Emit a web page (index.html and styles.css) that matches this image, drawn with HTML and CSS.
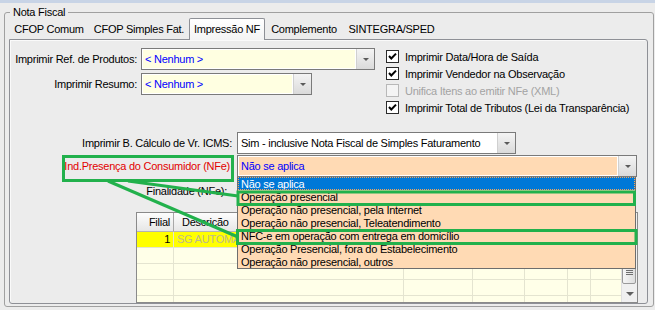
FILE: index.html
```html
<!DOCTYPE html>
<html lang="pt-BR">
<head>
<meta charset="UTF-8">
<title>Nota Fiscal - Impressão NF</title>
<link rel="stylesheet" href="styles.css">
</head>
<body>
<div class="titlebar"></div>
<fieldset class="group">
    <legend>Nota Fiscal</legend>
    <div class="tabs">
        <div class="tab tab-comum">CFOP Comum</div>
        <div class="tab tab-simples">CFOP Simples Fat.</div>
        <div class="tab tab-impressao active">Impressão NF</div>
        <div class="tab tab-complemento">Complemento</div>
        <div class="tab tab-sintegra">SINTEGRA/SPED</div>
    </div>
    <div class="page">
        <div class="top">
            <div class="fields">
                <div class="field">
                    <span class="lbl">Imprimir Ref. de Produtos:</span>
                    <div class="combo combo-ref"><span class="val yellow">&lt; Nenhum &gt;</span><span class="btn"></span></div>
                </div>
                <div class="field">
                    <span class="lbl">Imprimir Resumo:</span>
                    <div class="combo combo-resumo"><span class="val yellow">&lt; Nenhum &gt;</span><span class="btn"></span></div>
                </div>
            </div>
            <div class="checks">
                <label class="check"><span class="box checked"></span>Imprimir Data/Hora de Saída</label>
                <label class="check"><span class="box checked"></span>Imprimir Vendedor na Observação</label>
                <label class="check disabled"><span class="box"></span>Unifica Itens ao emitir NFe (XML)</label>
                <label class="check"><span class="box checked"></span>Imprimir Total de Tributos (Lei da Transparência)</label>
            </div>
        </div>

        <div class="row row-icms">
            <span class="lbl">Imprimir B. Cálculo de Vr. ICMS:</span>
            <div class="combo combo-icms"><span class="val white">Sim - inclusive Nota Fiscal de Simples Faturamento</span><span class="btn"></span></div>
        </div>

        <div class="row row-presenca">
            <span class="lbl red">Ind.Presença do Consumidor (NFe)</span>
            <div class="combo combo-presenca">
                <span class="val peach">Não se aplica</span><span class="btn"></span>
                <ul class="droplist">
                    <li class="selected">Não se aplica</li>
                    <li>Operação presencial</li>
                    <li>Operação não presencial, pela Internet</li>
                    <li>Operação não presencial, Teleatendimento</li>
                    <li>NFC-e em operação com entrega em domicílio</li>
                    <li>Operação Presencial, fora do Estabelecimento</li>
                    <li>Operação não presencial, outros</li>
                </ul>
            </div>
        </div>

        <div class="row row-finalidade">
            <span class="lbl">Finalidade (NFe):</span>
        </div>

        <div class="grid">
            <div class="cols">
                <div class="grow head">
                    <span class="right">Filial</span><span>Descrição</span><span></span><span></span><span></span><span></span><span></span>
                </div>
                <div class="grow hilite">
                    <span class="right">1</span><span class="muted">SG AUTOMAÇÃO</span><span></span><span></span><span></span><span></span><span></span>
                </div>
                <div class="grow"><span></span><span></span><span></span><span></span><span></span><span></span><span></span></div>
                <div class="grow"><span></span><span></span><span></span><span></span><span></span><span></span><span></span></div>
                <div class="grow"><span></span><span></span><span></span><span></span><span></span><span></span><span></span></div>
                <div class="grow"><span></span><span></span><span></span><span></span><span></span><span></span><span></span></div>
            </div>
            <div class="vscroll">
                <span class="sbtn up"></span>
                <span class="thumb"></span>
                <span class="sbtn down"></span>
            </div>
        </div>
    </div>
</fieldset>

<svg class="notes" width="655" height="310" viewBox="0 0 655 310">
    <rect x="63.5" y="156.5" width="169" height="24"></rect>
    <rect x="238" y="192" width="396.5" height="12.5"></rect>
    <rect x="237.5" y="230.5" width="398.5" height="13"></rect>
    <line x1="128" y1="181" x2="238" y2="196"></line>
    <line x1="108" y1="181" x2="238" y2="237"></line>
</svg>
</body>
</html>
```

FILE: styles.css
```css
body {
    margin: 0;
    width: 655px;
    height: 310px;
    overflow: hidden;
    position: relative;
    background-color: #ececec;
    color: #000;
    font-family: "Liberation Sans", Arial, sans-serif;
    font-size: 11px;
    letter-spacing: -0.25px;
}
.titlebar {
    height: 3px;
    background-color: #c8d4e6;
}
.group {
    margin: 3px 1px 0 4px;
    padding: 0 5px 2px 4px;
    border: 1px solid #a0a0a0;
    border-radius: 3px;
    height: 301px;
    box-sizing: border-box;
    min-width: 0;
}
.group legend {
    margin-left: 1px;
    padding: 0 3px;
    line-height: 13px;
}
.tabs {
    display: flex;
    height: 20px;
    align-items: flex-end;
}
.tab {
    height: 20px;
    line-height: 20px;
    text-align: center;
    white-space: nowrap;
}
.tab-comum { width: 80px; }
.tab-simples { width: 100px; }
.tab-impressao { width: 74px; }
.tab-complemento { width: 78px; }
.tab-sintegra { width: 97px; }
.tab.active {
    height: 21px;
    line-height: 20px;
    margin-bottom: -1px;
    border: 1px solid #8e9096;
    border-bottom: none;
    border-radius: 2px 2px 0 0;
    background: linear-gradient(#ffffff, #f4f4f4);
    position: relative;
    z-index: 1;
}
.page {
    height: 265px;
    box-sizing: border-box;
    border: 1px solid #8e9096;
    border-radius: 0 3px 3px 3px;
    box-shadow: inset 1px 1px 0 #fafafa;
    background-color: #ececec;
}
.top {
    display: flex;
    gap: 11px;
    padding-top: 8px;
}
.fields {
    width: 365px;
    display: flex;
    flex-direction: column;
    gap: 3px;
}
.field {
    display: flex;
    align-items: center;
    gap: 4px;
    height: 22px;
}
.field .lbl {
    width: 127px;
    text-align: right;
    white-space: nowrap;
}
.combo {
    display: flex;
    height: 22px;
    box-sizing: border-box;
    border: 1px solid #7a7a7a;
    padding: 1px;
    background-color: #fff;
    position: relative;
}
.combo-ref { width: 234px; }
.combo-resumo { width: 171px; }
.combo-icms { width: 279px; }
.combo-presenca { width: 400px; }
.combo .val {
    flex: 1;
    padding-left: 2px;
    line-height: 18px;
    white-space: nowrap;
    overflow: hidden;
}
.val.yellow { background-color: #ffffe1; color: #0000ff; }
.val.white { background-color: #fff; }
.val.peach { background-color: #ffdab4; color: #0000ff; }
.combo .btn {
    width: 17px;
    margin: -1px -1px -1px 1px;
    background: linear-gradient(#f4f4f4, #dadada);
    border-left: 1px solid #d0d0d0;
    display: flex;
    align-items: center;
    justify-content: center;
}
.combo .btn::after {
    content: "";
    border-left: 3px solid transparent;
    border-right: 3px solid transparent;
    border-top: 3px solid #5a5a5a;
}
.checks {
    display: flex;
    flex-direction: column;
}
.check {
    display: flex;
    align-items: center;
    gap: 6px;
    height: 17px;
    white-space: nowrap;
}
.box {
    width: 13px;
    height: 13px;
    box-sizing: border-box;
    border: 1px solid #2b2b2b;
    background-color: #fff;
}
.box.checked {
    background: #fff url("data:image/svg+xml;utf8,<svg xmlns='http://www.w3.org/2000/svg' width='11' height='11'><polyline points='2,5 4.3,7.5 9,2.6' fill='none' stroke='black' stroke-width='2'/></svg>") no-repeat center;
}
.check.disabled {
    color: #a3a3a3;
}
.check.disabled .box {
    border-color: #b8b8b8;
    background-color: #f4f4f4;
}
.row {
    display: flex;
    align-items: center;
    gap: 5px;
    height: 22px;
}
.row .lbl {
    width: 222px;
    box-sizing: border-box;
    text-align: right;
    white-space: nowrap;
}
.row-icms { margin-top: 16px; }
.row-presenca { margin-top: 1px; position: relative; z-index: 2; }
.row-presenca .lbl { padding-right: 2px; }
.row-finalidade { margin-top: 3px; }
.row-finalidade .lbl { padding-right: 5px; }
.red { color: #e20000; }
.droplist {
    position: absolute;
    left: -1px;
    top: 21px;
    width: 399px;
    box-sizing: border-box;
    margin: 0;
    padding: 0;
    list-style: none;
    border: 1px solid #6e6e6e;
    border-top: none;
    background-color: #ffdab4;
}
.droplist li {
    height: 12px;
    padding: 1px 0 0 3px;
    line-height: 13px;
    white-space: nowrap;
}
.droplist li.selected {
    background-color: #0078d7;
    color: #fff;
    outline: 1px dotted #f3a65a;
    outline-offset: -1px;
}
.grid {
    display: flex;
    margin: 10px 0 0 126px;
    width: 502px;
    height: 91px;
    box-sizing: border-box;
    border: 1px solid #8a8a8a;
    background-color: #ffffe8;
    overflow: hidden;
}
.cols {
    flex: 1;
}
.grow {
    display: grid;
    grid-template-columns: 37px 230px 69px 52px 43px 23px 30px;
    height: 16px;
    box-sizing: border-box;
    border-bottom: 1px solid #e4e4d0;
}
.grow span {
    border-right: 1px solid #e4e4d0;
    padding: 0 3px;
    line-height: 15px;
    white-space: nowrap;
    overflow: hidden;
}
.grow span:last-child {
    border-right: none;
}
.grow .right {
    text-align: right;
}
.grow.head {
    height: 19px;
    background: linear-gradient(#fdfdfd, #e6e6e6);
    border-bottom: 1px solid #b4b4b4;
}
.grow.head span {
    line-height: 18px;
    border-right-color: #a8a8a8;
}
.grow.head span:nth-child(2) {
    padding-left: 8px;
}
.grow.hilite span:nth-child(-n+2) {
    background-color: #ffff00;
}
.muted {
    color: #bdb98c;
}
.vscroll {
    width: 16px;
    display: flex;
    flex-direction: column;
    background-color: #f0f0f0;
    border-left: 1px solid #e0e0e0;
}
.sbtn {
    height: 16px;
    display: flex;
    align-items: center;
    justify-content: center;
}
.sbtn.down::after {
    content: "";
    border-left: 4px solid transparent;
    border-right: 4px solid transparent;
    border-top: 4px solid #606060;
}
.sbtn.up::after {
    content: "";
    border-left: 4px solid transparent;
    border-right: 4px solid transparent;
    border-bottom: 4px solid #606060;
}
.thumb {
    flex: 1;
    margin: 1px 1px 2px 0;
    border: 1px solid #9a9a9a;
    border-radius: 2px;
    background-image: linear-gradient(#6f6f6f, #6f6f6f), linear-gradient(#6f6f6f, #6f6f6f), linear-gradient(#6f6f6f, #6f6f6f), linear-gradient(90deg, #f6f6f6, #dedede);
    background-size: 7px 1px, 7px 1px, 7px 1px, 100% 100%;
    background-position: 3px calc(100% - 12px), 3px calc(100% - 10px), 3px calc(100% - 8px), 0 0;
    background-repeat: no-repeat;
}
.notes {
    position: absolute;
    top: 0;
    left: 0;
    pointer-events: none;
    z-index: 5;
}
.notes rect,
.notes line {
    fill: none;
    stroke: #22b14c;
    stroke-width: 3;
}
```
